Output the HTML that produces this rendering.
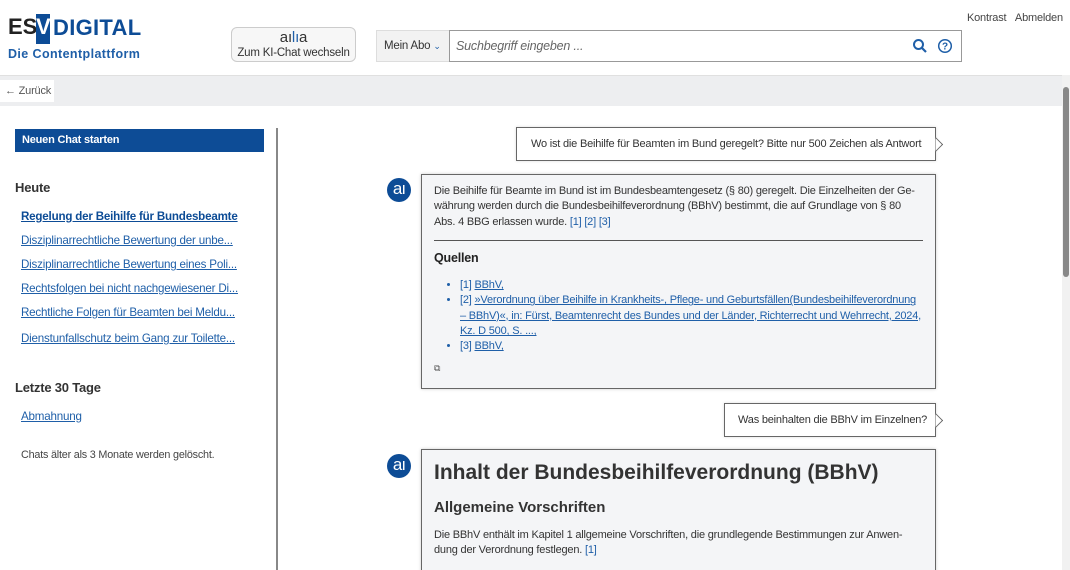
<!DOCTYPE html>
<html><head><meta charset="utf-8"><style>
*{margin:0;padding:0;box-sizing:border-box}
html,body{width:1070px;height:570px;overflow:hidden}
body{position:relative;background:#fff;font-family:"Liberation Sans",sans-serif;color:#333;font-size:11px;letter-spacing:-0.2px}
.a{position:absolute}
a,.lnk{color:#1f5fa8;text-decoration:underline}
.bl{color:#1f5fa8}
.bubble{position:absolute;border:1px solid #666;background:#fff;font-size:11px;color:#333;box-shadow:0 0 3px #ddd;white-space:nowrap}
.bubble:after{content:"";position:absolute;right:-6px;top:11px;width:10px;height:10px;border-top:1px solid #666;border-right:1px solid #666;background:#fff;transform:rotate(45deg);clip-path:polygon(0 0,100% 0,100% 100%)}
.box{position:absolute;border:1px solid #666;background:#f4f5f7;box-shadow:0 0 3px #ccc;white-space:nowrap}
.av{position:absolute;width:24px;height:24px;border-radius:50%;background:#0d4c96;color:#fff;font-size:17px;line-height:22px;text-align:center;letter-spacing:-1px}
.side a{position:absolute;left:21px;font-size:11.6px}
</style></head><body>
<div class="a" style="left:8px;top:14px;font-size:22px;font-weight:bold;color:#222;letter-spacing:0">ES</div>
<div class="a" style="left:36px;top:14px;width:14px;height:30px;background:#0d4c96"></div>
<div class="a" style="left:36px;top:14px;font-size:22px;font-weight:bold;color:#fff;letter-spacing:0">V</div>
<div class="a" style="left:53px;top:15px;font-size:22px;font-weight:bold;color:#0d4c96;letter-spacing:0.3px">DIGITAL</div>
<div class="a" style="left:8px;top:47px;font-size:12.5px;color:#1f5fa8;font-weight:bold;letter-spacing:0.4px">Die Contentplattform</div>
<div class="a" style="left:231px;top:27px;width:125px;height:35px;border:1px solid #ccc;border-radius:6px;background:#f7f7f7;text-align:center">
<div style="font-size:15px;color:#333;line-height:18px;margin-top:1px">a<span>ı</span><span style="color:#1f5fa8">l</span><span style="color:#1f5fa8">ı</span>a</div>
<div style="font-size:11.5px;color:#333">Zum KI-Chat wechseln</div></div>
<div class="a" style="left:376px;top:30px;width:74px;height:32px;border:1px solid #ddd;background:#f2f2f2;font-size:11.5px;line-height:30px;padding-left:7px;color:#333">Mein Abo <span style="color:#1f5fa8;font-size:9px">⌄</span></div>
<div class="a" style="left:449px;top:30px;width:513px;height:32px;border:1px solid #999;background:#fff;font-style:italic;color:#666;font-size:12.5px;line-height:30px;padding-left:6px">Suchbegriff eingeben ...</div>
<svg class="a" style="left:912px;top:38px" width="16" height="16" viewBox="0 0 16 16"><circle cx="6.5" cy="6.5" r="4.5" stroke="#1f5fa8" stroke-width="2" fill="none"/><path d="M10 10l4 4" stroke="#1f5fa8" stroke-width="2.2"/></svg>
<svg class="a" style="left:937px;top:38px" width="16" height="16" viewBox="0 0 16 16"><circle cx="8" cy="8" r="6.3" stroke="#1f5fa8" stroke-width="1.5" fill="none"/><text x="8" y="11.5" font-size="10" text-anchor="middle" fill="#1f5fa8" font-family="Liberation Sans" font-weight="bold">?</text></svg>
<div class="a" style="left:967px;top:12px;font-size:11px;color:#444">Kontrast&nbsp;&nbsp;&nbsp;Abmelden</div>
<div class="a" style="left:0;top:75px;width:1062px;height:31px;background:#edeef0;border-top:1px solid #e0e0e0"></div>
<div class="a" style="left:0;top:80px;width:54px;height:22px;background:#fff;font-size:11px;line-height:22px;padding-left:5px;color:#555">← Zurück</div>
<div class="a" style="left:1062px;top:75px;width:8px;height:495px;background:#f1f1f1"></div>
<div class="a" style="left:1063px;top:87px;width:6px;height:190px;background:#888;border-radius:3px"></div>
<div class="side">
<div class="a" style="left:15px;top:129px;width:249px;height:23px;background:#0d4c96;color:#fff;font-weight:bold;font-size:11px;line-height:23px;padding-left:7px">Neuen Chat starten</div>
<div class="a" style="left:15px;top:180px;font-size:13px;font-weight:bold;color:#333">Heute</div>
<a style="top:210px;font-weight:bold;color:#0d4c96">Regelung der Beihilfe für Bundesbeamte</a>
<a style="top:234px">Disziplinarrechtliche Bewertung der unbe...</a>
<a style="top:258px">Disziplinarrechtliche Bewertung eines Poli...</a>
<a style="top:282px">Rechtsfolgen bei nicht nachgewiesener Di...</a>
<a style="top:306px">Rechtliche Folgen für Beamten bei Meldu...</a>
<a style="top:332px">Dienstunfallschutz beim Gang zur Toilette...</a>
<div class="a" style="left:15px;top:380px;font-size:13px;font-weight:bold;color:#333">Letzte 30 Tage</div>
<a style="top:410px">Abmahnung</a>
<div class="a" style="left:21px;top:449px;font-size:10.8px;color:#444">Chats älter als 3 Monate werden gelöscht.</div>
</div>
<div class="a" style="left:276px;top:128px;width:2px;height:442px;background:#888"></div>
<div class="bubble" style="left:516px;top:127px;width:420px;height:34px;line-height:32px;padding-left:14px">Wo ist die Beihilfe für Beamten im Bund geregelt? Bitte nur 500 Zeichen als Antwort</div>
<div class="av" style="left:387px;top:178px">aı</div>
<div class="box" style="left:421px;top:174px;width:515px;height:215px;padding:9px 12px;font-size:11px;line-height:15.3px">
<div>Die Beihilfe für Beamte im Bund ist im Bundesbeamtengesetz (§ 80) geregelt. Die Einzelheiten der Ge-<br>währung werden durch die Bundesbeihilfeverordnung (BBhV) bestimmt, die auf Grundlage von § 80<br>Abs. 4 BBG erlassen wurde. <span class="bl">[1] [2] [3]</span></div>
<div style="border-top:1px solid #555;margin:10px 0 10px"></div>
<div style="font-weight:bold;font-size:12.5px;color:#222">Quellen</div>
<ul style="margin:12px 0 0 26px;color:#1f5fa8">
<li>[1] <span class="lnk">BBhV,</span></li>
<li>[2] <span class="lnk">»Verordnung über Beihilfe in Krankheits-, Pflege- und Geburtsfällen(Bundesbeihilfeverordnung</span><br><span class="lnk">– BBhV)«, in: Fürst, Beamtenrecht des Bundes und der Länder, Richterrecht und Wehrrecht, 2024,</span><br><span class="lnk">Kz. D 500, S. ...,</span></li>
<li>[3] <span class="lnk">BBhV,</span></li>
</ul>
<div style="margin-top:6px;font-size:9px;color:#555">⧉</div>
</div>
<div class="bubble" style="left:724px;top:403px;width:212px;height:34px;line-height:32px;padding-left:13px">Was beinhalten die BBhV im Einzelnen?</div>
<div class="av" style="left:387px;top:454px">aı</div>
<div class="box" style="left:421px;top:449px;width:515px;height:130px;padding:11px 12px">
<div style="font-size:21px;font-weight:bold;color:#333;letter-spacing:0">Inhalt der Bundesbeihilfeverordnung (BBhV)</div>
<div style="font-size:15px;font-weight:bold;color:#333;margin-top:14px;letter-spacing:0">Allgemeine Vorschriften</div>
<div style="font-size:11px;line-height:15.3px;margin-top:12px">Die BBhV enthält im Kapitel 1 allgemeine Vorschriften, die grundlegende Bestimmungen zur Anwen-<br>dung der Verordnung festlegen. <span class="bl">[1]</span></div>
</div>
</body></html>
